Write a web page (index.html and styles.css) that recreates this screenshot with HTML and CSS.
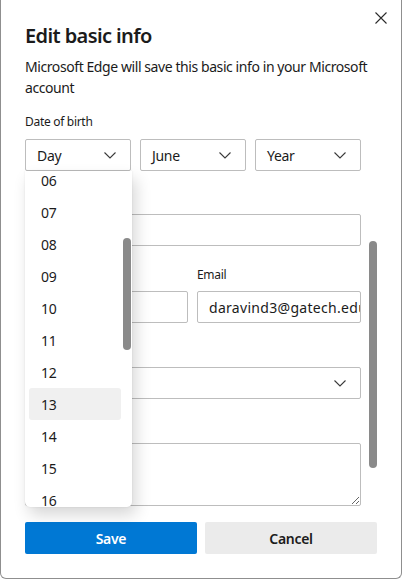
FILE: index.html
```html
<!DOCTYPE html>
<html lang="en">
<head>
<meta charset="utf-8">
<title>Edit basic info</title>
<link rel="stylesheet" href="styles.css">
</head>
<body>
<div class="dialog">
  <button class="close" aria-label="Close">
    <svg width="12" height="12" viewBox="0 0 12 12"><path d="M0.5 0.5 L11.5 11.5 M11.5 0.5 L0.5 11.5" stroke="#2b2b2b" stroke-width="1.1" fill="none"/></svg>
  </button>
  <div class="content">
    <h1 class="title">Edit basic info</h1>
    <p class="desc">Microsoft Edge will save this basic info in your Microsoft account</p>

    <div class="form">
      <div class="label dob-label">Date of birth</div>
      <div class="dob-row">
        <div class="select-wrap">
          <div class="select">
            <span>Day</span>
            <svg class="chev" width="12" height="7" viewBox="0 0 12 7"><path d="M0.5 0.5 L6 6 L11.5 0.5" stroke="#3a3a3a" stroke-width="1.1" fill="none"/></svg>
          </div>
          <div class="listbox">
            <ul class="options">
              <li>06</li><li>07</li><li>08</li><li>09</li><li>10</li><li>11</li><li>12</li><li class="hover">13</li><li>14</li><li>15</li><li>16</li>
            </ul>
            <div class="list-thumb"></div>
          </div>
        </div>
        <div class="select">
          <span>June</span>
          <svg class="chev" width="12" height="7" viewBox="0 0 12 7"><path d="M0.5 0.5 L6 6 L11.5 0.5" stroke="#3a3a3a" stroke-width="1.1" fill="none"/></svg>
        </div>
        <div class="select">
          <span>Year</span>
          <svg class="chev" width="12" height="7" viewBox="0 0 12 7"><path d="M0.5 0.5 L6 6 L11.5 0.5" stroke="#3a3a3a" stroke-width="1.1" fill="none"/></svg>
        </div>
      </div>

      <div class="field first">
        <div class="label" aria-label="Name"></div>
        <div class="input"></div>
      </div>

      <div class="field-row">
        <div class="field">
          <div class="label" aria-label="Phone"></div>
          <div class="input"></div>
        </div>
        <div class="field">
          <div class="label">Email</div>
          <div class="input"><span class="value">daravind3@gatech.edu</span></div>
        </div>
      </div>

      <div class="field">
        <div class="label" aria-label="Country/region"></div>
        <div class="select">
          <span></span>
          <svg class="chev" width="12" height="7" viewBox="0 0 12 7"><path d="M0.5 0.5 L6 6 L11.5 0.5" stroke="#3a3a3a" stroke-width="1.1" fill="none"/></svg>
        </div>
      </div>

      <div class="field">
        <div class="label" aria-label="Address"></div>
        <textarea class="textarea"></textarea>
      </div>
    </div>
    <div class="main-thumb"></div>
  </div>
  <div class="footer">
    <button class="btn primary">Save</button>
    <button class="btn secondary">Cancel</button>
  </div>
</div>
</body>
</html>
```
FILE: styles.css
```css
* { box-sizing: border-box; }
html, body { margin: 0; padding: 0; background: #ffffff; }
body {
  width: 402px;
  height: 579px;
  overflow: hidden;
  font-family: "Noto Sans", "Open Sans", sans-serif;
  color: #1b1b1b;
}
.dialog {
  position: relative;
  width: 402px;
  height: 579px;
  background: #fff;
  border: 1px solid #8f8f8f;
  border-top: none;
  border-radius: 0 0 6px 6px;
  padding: 22px 24px 25px 24px;
  display: flex;
  flex-direction: column;
}
.close {
  position: absolute;
  top: 12px;
  right: 14px;
  width: 12px;
  height: 12px;
  padding: 0;
  border: none;
  background: none;
  display: flex;
}
.content {
  position: relative;
  width: 352px;
  display: flex;
  flex-direction: column;
}
.form {
  width: 336px;
  display: flex;
  flex-direction: column;
}
.title {
  margin: 0;
  font-size: 20px;
  line-height: 28px;
  font-weight: 600;
  letter-spacing: -0.6px;
  color: #1b1b1b;
}
.desc {
  margin: 6px 0 0 0;
  font-size: 14px;
  line-height: 21px;
  letter-spacing: -0.42px;
  color: #1b1b1b;
}
.label {
  height: 16px;
  font-size: 12px;
  line-height: 16px;
  letter-spacing: -0.3px;
  color: #1b1b1b;
}
.dob-label { margin-top: 16px; }
.dob-row {
  margin-top: 9px;
  display: grid;
  grid-template-columns: 106px 106px 106px;
  column-gap: 9px;
}
.select-wrap { position: relative; }
.select {
  height: 32px;
  border: 1px solid #bdbdbd;
  border-radius: 2px;
  display: flex;
  align-items: center;
  justify-content: space-between;
  padding: 0 14px 0 11px;
  font-size: 14px;
  letter-spacing: -0.3px;
  color: #1b1b1b;
  background: #fff;
}
.chev { display: block; }
.listbox {
  position: absolute;
  top: 32px;
  left: 0;
  width: 107px;
  height: 336px;
  background: #fff;
  border-radius: 0 0 5px 5px;
  box-shadow: 4px 8px 16px rgba(0,0,0,0.16), 0 0 2px rgba(0,0,0,0.10);
  overflow: hidden;
  z-index: 5;
}
.options {
  list-style: none;
  margin: -7px 0 0 0;
  padding: 0 11px 0 4px;
}
.options li {
  height: 32px;
  display: flex;
  align-items: center;
  padding-left: 12px;
  font-size: 14px;
  letter-spacing: -0.2px;
  border-radius: 3px;
  color: #1b1b1b;
}
.options li.hover { background: #f0f0f0; }
.list-thumb {
  position: absolute;
  left: 98px;
  top: 67px;
  width: 8px;
  height: 112px;
  background: #8a8a8a;
  border-radius: 4px;
}
.field { display: flex; flex-direction: column; gap: 8px; margin-top: 20px; }
.field.first { margin-top: 19px; }
.field-row {
  display: grid;
  grid-template-columns: 163px 164px;
  column-gap: 9px;
}
.field-row .field { margin-top: 21px; }
.input {
  height: 32px;
  border: 1px solid #bdbdbd;
  border-radius: 2px;
  padding-left: 11px;
  display: flex;
  align-items: center;
  overflow: hidden;
  white-space: nowrap;
  font-size: 14px;
  color: #1b1b1b;
}
.value { letter-spacing: 0.3px; }
.textarea {
  display: block;
  width: 336px;
  height: 63px;
  border: 1px solid #bdbdbd;
  border-radius: 2px;
  font-family: inherit;
  font-size: 14px;
  resize: vertical;
  margin: 0;
}
.main-thumb {
  position: absolute;
  left: 344px;
  top: 219px;
  width: 8px;
  height: 227px;
  background: #8a8a8a;
  border-radius: 4px;
}
.footer {
  margin-top: 16px;
  display: grid;
  grid-template-columns: 172px 172px;
  column-gap: 8px;
}
.btn {
  height: 32px;
  border: none;
  border-radius: 2px;
  font-family: inherit;
  font-size: 14px;
  font-weight: 600;
  letter-spacing: -0.3px;
}
.primary { background: #0078d4; color: #fff; }
.secondary { background: #ebebeb; color: #1b1b1b; }
```
